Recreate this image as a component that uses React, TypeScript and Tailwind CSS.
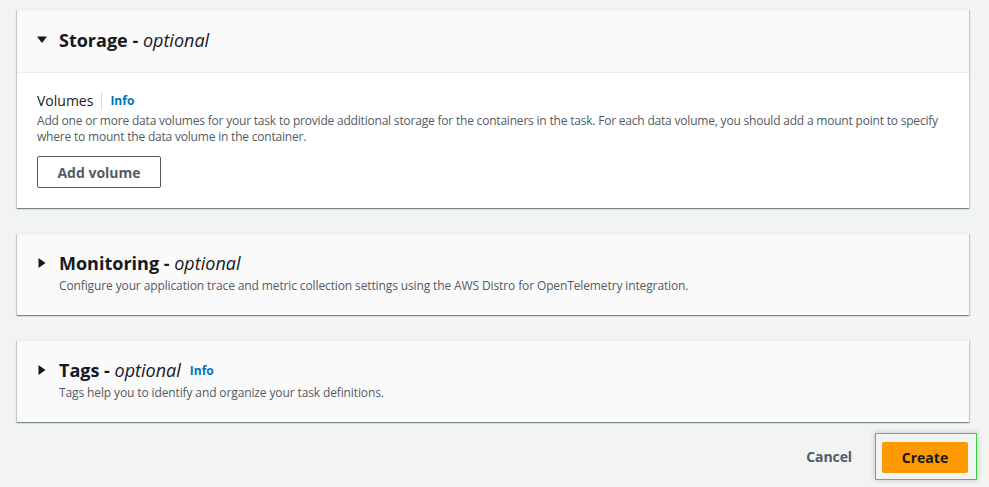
const Caret = ({ open }: { open: boolean }) => (
  <svg width="10" height="10" viewBox="0 0 10 10" className="shrink-0">
    {open ? <path d="M0 1.5h10L5 8z" fill="#16191f" /> : <path d="M1.5 0v10l7-5z" fill="#16191f" />}
  </svg>
);

const card =
  "shadow-[0_1px_1px_0_rgba(0,28,36,0.3),1px_1px_1px_0_rgba(0,28,36,0.15),-1px_1px_1px_0_rgba(0,28,36,0.15)] border-t border-[#eaeded]";

const CollapsedSection = ({ title, desc, info }: { title: string; desc: string; info?: boolean }) => (
  <div className={`${card} bg-[#fafafa] h-[82px] px-5 pt-[17px]`}>
    <div className="flex items-center gap-3 h-[24px]">
      <Caret open={false} />
      <div className="flex items-center gap-[9px]">
        <h2 className="text-[18px] font-bold text-[#16191f] leading-6">
          {title} - <i className="font-normal">optional</i>
        </h2>
        {info && <span className="text-[12px] font-bold text-[#0073bb] mt-0.5">Info</span>}
      </div>
    </div>
    <p className="pl-[22px] text-[12px] text-[#545b64] leading-4 mt-[3px] tracking-[-0.12px]">{desc}</p>
  </div>
);

export default function App() {
  return (
    <div
      className="min-h-[487px] bg-[#f2f3f3] pl-[17px] pr-[20px] pt-[9px]"
      style={{ fontFamily: '"Open Sans", "Noto Sans", sans-serif' }}
    >
      <div className="flex flex-col gap-[25px]">
        <div className={`${card} bg-white`}>
          <div className="bg-[#fafafa] h-[63px] px-5 pb-[3px] flex items-center gap-3 border-b border-[#eaeded]">
            <Caret open />
            <h2 className="text-[18px] font-bold text-[#16191f] leading-6">
              Storage - <i className="font-normal">optional</i>
            </h2>
          </div>
          <div className="px-5 pt-[19px] pb-[20px]">
            <div className="flex items-center h-[18px]">
              <span className="text-[14px] text-[#16191f] pr-2 border-r border-[#d5dbdb] leading-[18px]">Volumes</span>
              <span className="text-[12px] font-bold text-[#0073bb] pl-2">Info</span>
            </div>
            <p className="text-[12px] text-[#545b64] leading-4 mt-[3px] tracking-[-0.2px]">
              Add one or more data volumes for your task to provide additional storage for the containers in the task. For each data volume, you should add a mount point to specify where to mount the data volume in the container.
            </p>
            <button className="mt-[11px] h-[32px] w-[124px] border border-[#545b64] rounded-[2px] bg-white text-[14px] font-bold text-[#545b64]">
              Add volume
            </button>
          </div>
        </div>

        <CollapsedSection
          title="Monitoring"
          desc="Configure your application trace and metric collection settings using the AWS Distro for OpenTelemetry integration."
        />
        <CollapsedSection
          title="Tags"
          info
          desc="Tags help you to identify and organize your task definitions."
        />
      </div>

      <div className="flex justify-end items-center mt-[11px] mr-[-8px] gap-[23px]">
        <button className="text-[14px] font-bold text-[#545b64] tracking-[-0.1px]">Cancel</button>
        <div className="border border-[#3ad13a] pl-[6px] pr-[8px] pt-[8px] pb-[6px] shadow-[0_0_6px_rgba(0,0,0,0.2)]">
          <button className="h-[31px] w-[86px] bg-[#ff9900] rounded-[2px] text-[14px] font-bold text-[#16191f]">
            Create
          </button>
        </div>
      </div>
    </div>
  );
}
